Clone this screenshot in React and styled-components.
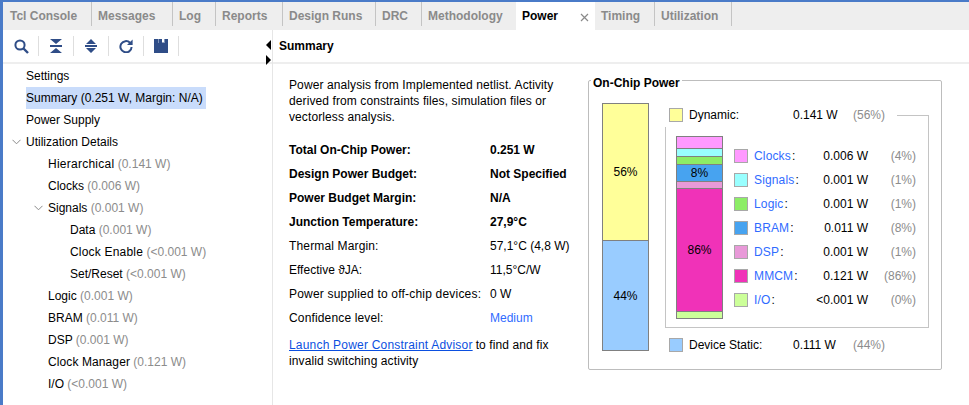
import React from 'react';
import styled, { createGlobalStyle } from 'styled-components';

const GlobalStyle = createGlobalStyle`
  html, body {
    margin: 0;
    padding: 0;
    background: #fff;
  }
  body {
    font-family: "Liberation Sans", Arial, sans-serif;
    font-size: 12px;
    color: #000;
  }
`;

const Window = styled.div`
  width: 969px;
  height: 405px;
  box-sizing: border-box;
  border-top: 2px solid #4a7bc8;
  border-left: 3px solid #4a7bc8;
  display: flex;
  flex-direction: column;
  overflow: hidden;
`;

const TabBar = styled.div`
  height: 28px;
  flex: none;
  display: flex;
  background: #eeeeee;
`;

const Tab = styled.div`
  box-sizing: border-box;
  width: ${p => p.$w}px;
  height: ${p => (p.$active ? 28 : 24)}px;
  padding-left: ${p => p.$pad}px;
  line-height: 28px;
  font-weight: bold;
  color: ${p => (p.$active ? '#000' : '#8a8a8a')};
  background: ${p => (p.$active ? '#fff' : 'transparent')};
  border-right: ${p => (p.$active || p.$noline ? '0' : '1px solid #c4c4c4')};
  position: relative;
`;

const CloseIcon = styled.svg`
  position: absolute;
  right: 6px;
  top: 11px;
`;

const Body = styled.div`
  flex: 1;
  display: flex;
  min-height: 0;
`;

const LeftPane = styled.div`
  width: 269px;
  flex: none;
  border-right: 1px solid #e6e6e6;
  position: relative;
`;

const Toolbar = styled.div`
  box-sizing: border-box;
  height: 34px;
  padding: 6px 0 0 1px;
  border-bottom: 2px solid #eeeeee;
  display: flex;
  align-items: flex-start;
`;

const ToolButton = styled.div`
  width: 35px;
  height: 20px;
  box-sizing: border-box;
  border-right: 1px solid #dedede;
  display: flex;
  align-items: center;
  padding-left: ${p => p.$pad}px;
`;

const SashArrow = styled.div`
  position: absolute;
  right: 1px;
  top: ${p => p.$top}px;
  width: 0;
  height: 0;
  border-top: 5px solid transparent;
  border-bottom: 5px solid transparent;
  ${p => (p.$right ? 'border-left: 5px solid #000;' : 'border-right: 5px solid #000;')}
`;

const Tree = styled.div`
  padding-top: 1px;
`;

const TreeRow = styled.div`
  height: 22px;
  line-height: 22px;
  padding-left: ${p => p.$level * 22 + 23}px;
  position: relative;
  white-space: nowrap;
`;

const TreeLabel = styled.span`
  display: inline-block;
  background: ${p => (p.$selected ? '#c9dcfb' : 'transparent')};
  padding-right: ${p => (p.$selected ? 3 : 0)}px;
`;

const TreeName = styled.span`
  letter-spacing: ${p => p.$sp || 0}px;
`;

const Muted = styled.span`
  color: #8c8c8c;
`;

const Chevron = styled.svg`
  position: absolute;
  left: ${p => p.$level * 22 + 9}px;
  top: 8px;
`;

const RightPane = styled.div`
  flex: 1;
  min-width: 0;
`;

const SummaryHead = styled.div`
  box-sizing: border-box;
  height: 34px;
  padding-left: 6px;
  line-height: 33px;
  font-weight: bold;
  border-bottom: 2px solid #eeeeee;
`;

const Content = styled.div`
  display: flex;
  padding: 13px 0 0 16px;
`;

const Info = styled.div`
  width: 299px;
  flex: none;
`;

const Intro = styled.p`
  margin: 0 0 13px;
  line-height: 16px;
  width: 280px;
  letter-spacing: 0.1px;
`;

const InfoRow = styled.div`
  height: 24px;
  line-height: 24px;
  display: grid;
  grid-template-columns: 201px 1fr;
  font-weight: ${p => (p.$bold ? 'bold' : 'normal')};
  white-space: nowrap;
`;

const InfoLabel = styled.span`
  letter-spacing: ${p => p.$sp || 0}px;
`;

const LinkText = styled.a`
  color: ${p => (p.$plain ? '#2f6bff' : '#0b4fe0')};
  text-decoration: ${p => (p.$plain ? 'none' : 'underline')};
  letter-spacing: ${p => (p.$plain ? 0 : 0.2)}px;
`;

const Advisor = styled.div`
  margin-top: 7px;
  line-height: 16px;
  letter-spacing: 0.1px;
  white-space: nowrap;
`;

const AdvisorLine = styled.div`
  display: flex;
  gap: 3px;
`;

const ChipBox = styled.div`
  position: relative;
  box-sizing: border-box;
  width: 354px;
  height: 290px;
  margin-top: 3px;
  border: 1px solid #bdbdbd;
  border-radius: 2px;
  padding: 22px 0 0 13px;
  display: flex;
  gap: 20px;
`;

const ChipTitle = styled.div`
  position: absolute;
  left: 2px;
  top: -5px;
  padding: 0 2px;
  background: #fff;
  font-weight: bold;
  line-height: 14px;
`;

const Stack = styled.div`
  box-sizing: border-box;
  width: ${p => p.$w}px;
  height: ${p => p.$h}px;
  flex: none;
  border: 1px solid #808080;
  display: flex;
  flex-direction: column;
`;

const Segment = styled.div`
  box-sizing: border-box;
  height: ${p => p.$h}px;
  flex: none;
  background: ${p => p.$c};
  border-top: ${p => (p.$first ? '0' : '1px solid #808080')};
  display: flex;
  align-items: center;
  justify-content: center;
`;

const ChipRight = styled.div`
  display: flex;
  flex-direction: column;
  width: 260px;
`;

const SummaryRow = styled.div`
  display: grid;
  grid-template-columns: 20px 104px 60px 48px;
  align-items: center;
  height: 14px;
  margin-top: ${p => p.$before}px;
  margin-bottom: ${p => p.$after || 0}px;
  white-space: nowrap;
`;

const Swatch = styled.div`
  box-sizing: border-box;
  width: 14px;
  height: 14px;
  background: ${p => p.$c};
  border: 1px solid #a8a8a8;
`;

const Frame = styled.div`
  position: relative;
  box-sizing: border-box;
  width: 264px;
  height: 201px;
  margin-left: -4px;
  border: 1px solid #c4c4c4;
  border-top: 0;
  padding: 9px 0 0 10px;
  display: flex;
  gap: 11px;
  &::before {
    content: '';
    position: absolute;
    right: -1px;
    top: -12px;
    width: 31px;
    height: 12px;
    border-top: 1px solid #c4c4c4;
    border-right: 1px solid #c4c4c4;
  }
`;

const Breakdown = styled.div`
  display: flex;
  flex-direction: column;
  padding-top: 13px;
  gap: 10px;
`;

const BreakdownRow = styled.div`
  display: grid;
  grid-template-columns: 20px 114px 48px;
  height: 14px;
  line-height: 14px;
  align-items: center;
  white-space: nowrap;
`;

const NameValue = styled.div`
  display: flex;
  justify-content: space-between;
`;

const Pct = styled.span`
  color: #8c8c8c;
  text-align: ${p => (p.$left ? 'left' : 'right')};
`;

const Name = styled.span`
  color: #2f6bff;
  letter-spacing: 0.15px;
`;

const Colon = styled.span`
  color: #000;
  margin-left: 1px;
`;

const Icon = styled.svg`
  display: block;
  color: #2f4d87;
`;

const tabs = [
  ['Tcl Console', 89, 7],
  ['Messages', 81, 6],
  ['Log', 43, 6],
  ['Reports', 67, 6],
  ['Design Runs', 93, 6],
  ['DRC', 46, 6],
  ['Methodology', 94, 6],
  ['Power', 79, 6, true],
  ['Timing', 60, 6],
  ['Utilization', 77, 6],
];

const treeRows = [
  { level: 0, text: 'Settings' },
  { level: 0, text: 'Summary (0.251 W, Margin: N/A)', selected: true },
  { level: 0, text: 'Power Supply' },
  { level: 0, text: 'Utilization Details', open: true },
  { level: 1, text: 'Hierarchical', muted: '(0.141 W)', sp: 0.25 },
  { level: 1, text: 'Clocks', muted: '(0.006 W)' },
  { level: 1, text: 'Signals', muted: '(0.001 W)', open: true },
  { level: 2, text: 'Data', muted: '(0.001 W)' },
  { level: 2, text: 'Clock Enable', muted: '(<0.001 W)', sp: 0.2 },
  { level: 2, text: 'Set/Reset', muted: '(<0.001 W)' },
  { level: 1, text: 'Logic', muted: '(0.001 W)' },
  { level: 1, text: 'BRAM', muted: '(0.011 W)' },
  { level: 1, text: 'DSP', muted: '(0.001 W)' },
  { level: 1, text: 'Clock Manager', muted: '(0.121 W)', sp: 0.1 },
  { level: 1, text: 'I/O', muted: '(<0.001 W)' },
];

const infoRows = [
  { label: 'Total On-Chip Power:', value: '0.251 W', bold: true },
  { label: 'Design Power Budget:', value: 'Not Specified', bold: true },
  { label: 'Power Budget Margin:', value: 'N/A', bold: true },
  { label: 'Junction Temperature:', value: '27,9°C', bold: true },
  { label: 'Thermal Margin:', value: '57,1°C (4,8 W)', sp: 0.15 },
  { label: 'Effective ϑJA:', value: '11,5°C/W' },
  { label: 'Power supplied to off-chip devices:', value: '0 W', sp: 0.2 },
];

const breakdown = [
  ['Clocks', '0.006 W', '(4%)', '#ff99ff'],
  ['Signals', '0.001 W', '(1%)', '#99ffff'],
  ['Logic', '0.001 W', '(1%)', '#8ced66'],
  ['BRAM', '0.011 W', '(8%)', '#47a3f0'],
  ['DSP', '0.001 W', '(1%)', '#e899d8'],
  ['MMCM', '0.121 W', '(86%)', '#f032b8'],
  ['I/O', '<0.001 W', '(0%)', '#ccff99'],
];

const SearchIcon = () => (
  <Icon width="15" height="15" viewBox="0 0 15 15" fill="none" stroke="currentColor">
    <circle cx="6" cy="6" r="4.6" strokeWidth="2" />
    <path d="M9.5 9.5l4.5 4.5" strokeWidth="2.4" />
  </Icon>
);

const CollapseIcon = () => (
  <Icon width="12" height="14" viewBox="0 0 12 14" fill="currentColor">
    <path d="M0 0h12L6 5zM0 6h12v2H0zM6 9l6 5H0z" />
  </Icon>
);

const ExpandIcon = () => (
  <Icon width="12" height="14" viewBox="0 0 12 14" fill="currentColor">
    <path d="M6 0l5 5H1zM0 6h12v2H0zM1 9h10l-5 5z" />
  </Icon>
);

const RefreshIcon = () => (
  <Icon width="14" height="14" viewBox="0 0 14 14" fill="none" stroke="currentColor">
    <path d="M11 3.8A5.6 5.6 0 1 0 12.6 8" strokeWidth="2" />
    <path d="M13.6 0.4v5.6H8z" fill="currentColor" stroke="none" />
  </Icon>
);

const SaveIcon = () => (
  <Icon width="14" height="14" viewBox="0 0 14 14" fill="currentColor">
    <path d="M0 0h14v14H0z" />
    <path d="M4 0h1v4H4zM10 0h1v4h-1z" fill="#7f93b8" />
    <path d="M8 0h2v3.4H8z" fill="#fff" />
  </Icon>
);

const ChevronDown = ({ level }) => (
  <Chevron $level={level} width="9" height="6" viewBox="0 0 9 6" fill="none" stroke="#8a8a8a">
    <path d="M.5.8l4 4 4-4" />
  </Chevron>
);

const App = () => (
  <>
    <GlobalStyle />
    <Window>
      <TabBar>
        {tabs.map(([label, w, pad, active], i) => (
          <Tab key={label} $w={w} $pad={pad} $active={active} $noline={tabs[i + 1] && tabs[i + 1][3]}>
            {label}
            {active && (
              <CloseIcon width="9" height="9" viewBox="0 0 9 9" stroke="#8a8a8a" fill="none" strokeWidth="1.2">
                <path d="M1 1l7 7M8 1l-7 7" />
              </CloseIcon>
            )}
          </Tab>
        ))}
      </TabBar>
      <Body>
        <LeftPane>
          <Toolbar>
            <ToolButton $pad={10}><SearchIcon /></ToolButton>
            <ToolButton $pad={11}><CollapseIcon /></ToolButton>
            <ToolButton $pad={11}><ExpandIcon /></ToolButton>
            <ToolButton $pad={10}><RefreshIcon /></ToolButton>
            <ToolButton $pad={10}><SaveIcon /></ToolButton>
          </Toolbar>
          <SashArrow $top={10} />
          <SashArrow $top={25} $right />
          <Tree>
            {treeRows.map(row => (
              <TreeRow key={row.text} $level={row.level}>
                {row.open && <ChevronDown level={row.level} />}
                <TreeLabel $selected={row.selected}>
                  <TreeName $sp={row.sp}>{row.text}</TreeName>
                  {row.muted && <Muted> {row.muted}</Muted>}
                </TreeLabel>
              </TreeRow>
            ))}
          </Tree>
        </LeftPane>
        <RightPane>
          <SummaryHead>Summary</SummaryHead>
          <Content>
            <Info>
              <Intro>
                Power analysis from Implemented netlist. Activity derived from constraints files, simulation files or vectorless analysis.
              </Intro>
              {infoRows.map(row => (
                <InfoRow key={row.label} $bold={row.bold}>
                  <InfoLabel $sp={row.sp}>{row.label}</InfoLabel>
                  <span>{row.value}</span>
                </InfoRow>
              ))}
              <InfoRow>
                <InfoLabel $sp={0.15}>Confidence level:</InfoLabel>
                <LinkText $plain>Medium</LinkText>
              </InfoRow>
              <Advisor>
                <AdvisorLine>
                  <LinkText>Launch Power Constraint Advisor</LinkText>
                  <span>to find and fix</span>
                </AdvisorLine>
                <div>invalid switching activity</div>
              </Advisor>
            </Info>
            <ChipBox>
              <ChipTitle>On-Chip Power</ChipTitle>
              <Stack $w={47} $h={248}>
                <Segment $first $h={136} $c="#ffff99">56%</Segment>
                <Segment $h={110} $c="#99ccff">44%</Segment>
              </Stack>
              <ChipRight>
                <SummaryRow $before={5} $after={5}>
                  <Swatch $c="#ffff99" />
                  <span>Dynamic:</span>
                  <span>0.141 W</span>
                  <Pct $left>(56%)</Pct>
                </SummaryRow>
                <Frame>
                  <Stack $w={47} $h={183}>
                    <Segment $first $h={11} $c="#ff99ff" />
                    <Segment $h={8} $c="#99ffff" />
                    <Segment $h={8} $c="#8ced66" />
                    <Segment $h={17} $c="#47a3f0">8%</Segment>
                    <Segment $h={7} $c="#e899d8" />
                    <Segment $h={123} $c="#f032b8">86%</Segment>
                    <Segment $h={7} $c="#ccff99" />
                  </Stack>
                  <Breakdown>
                    {breakdown.map(([name, value, pct, color]) => (
                      <BreakdownRow key={name}>
                        <Swatch $c={color} />
                        <NameValue>
                          <Name>{name}<Colon>:</Colon></Name>
                          <span>{value}</span>
                        </NameValue>
                        <Pct>{pct}</Pct>
                      </BreakdownRow>
                    ))}
                  </Breakdown>
                </Frame>
                <SummaryRow $before={10}>
                  <Swatch $c="#99ccff" />
                  <span>Device Static:</span>
                  <span>0.111 W</span>
                  <Pct $left>(44%)</Pct>
                </SummaryRow>
              </ChipRight>
            </ChipBox>
          </Content>
        </RightPane>
      </Body>
    </Window>
  </>
);

export default App;
